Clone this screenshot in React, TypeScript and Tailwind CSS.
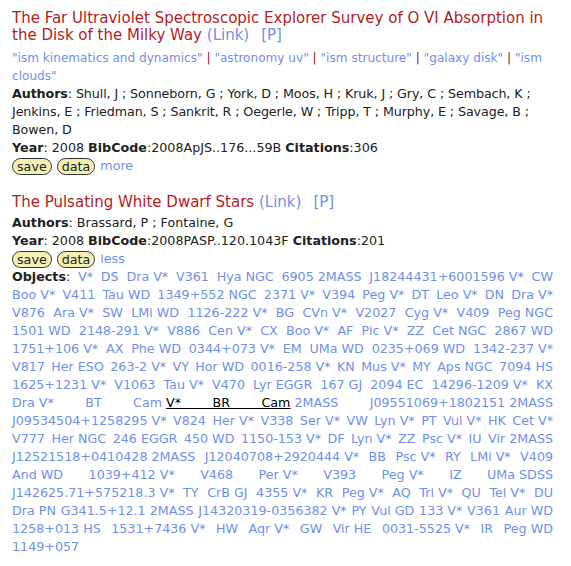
import React from 'react'

const objects = [
  'V* DS Dra', 'V* V361 Hya', 'NGC 6905', '2MASS J18244431+6001596', 'V* CW Boo', 'V* V411 Tau', 'WD 1349+552',
  'NGC 2371', 'V* V394 Peg', 'V* DT Leo', 'V* DN Dra', 'V* V876 Ara', 'V* SW LMi', 'WD 1126-222', 'V* BG CVn',
  'V* V2027 Cyg', 'V* V409 Peg', 'NGC 1501', 'WD 2148-291', 'V* V886 Cen', 'V* CX Boo', 'V* AF Pic', 'V* ZZ Cet',
  'NGC 2867', 'WD 1751+106', 'V* AX Phe', 'WD 0344+073', 'V* EM UMa', 'WD 0235+069', 'WD 1342-237', 'V* V817 Her',
  'ESO 263-2', 'V* VY Hor', 'WD 0016-258', 'V* KN Mus', 'V* MY Aps', 'NGC 7094', 'HS 1625+1231', 'V* V1063 Tau',
  'V* V470 Lyr', 'EGGR 167', 'GJ 2094', 'EC 14296-1209', 'V* KX Dra', 'V* BT Cam', 'V* BR Cam',
  '2MASS J09551069+1802151', '2MASS J09534504+1258295', 'V* V824 Her', 'V* V338 Ser', 'V* VW Lyn', 'V* PT Vul',
  'V* HK Cet', 'V* V777 Her', 'NGC 246', 'EGGR 450', 'WD 1150-153', 'V* DF Lyn', 'V* ZZ Psc', 'V* IU Vir',
  '2MASS J12521518+0410428', '2MASS J12040708+2920444', 'V* BB Psc', 'V* RY LMi', 'V* V409 And', 'WD 1039+412',
  'V* V468 Per', 'V* V393 Peg', 'V* IZ UMa', 'SDSS J142625.71+575218.3', 'V* TY CrB', 'GJ 4355', 'V* KR Peg',
  'V* AQ Tri', 'V* QU Tel', 'V* DU Dra', 'PN G341.5+12.1', '2MASS J14320319-0356382', 'V* PY Vul', 'GD 133',
  'V* V361 Aur', 'WD 1258+013', 'HS 1531+7436', 'V* HW Aqr', 'V* GW Vir', 'HE 0031-5525', 'V* IR Peg', 'WD 1149+057',
]

const keywords = ['ism kinematics and dynamics', 'astronomy uv', 'ism structure', 'galaxy disk', 'ism clouds']

const Pill = ({ label }: { label: string }) => (
  <span className="inline-block rounded-full border border-[#333] bg-[#f6efb4] px-[4px] leading-[15px] text-[#222]">
    {label}
  </span>
)

const Title = ({ text }: { text: string }) => (
  <div className="text-[15px] leading-[17px] text-[#b21d1d]">
    {text} <a className="text-[#6f90e8]">(Link)</a>
    <span className="ml-3 text-[#6f90e8]">[P]</span>
  </div>
)

export default function App() {
  return (
    <div className="w-[571px] min-h-[566px] bg-white pl-[12px] pr-[18px] pt-[10px] text-[12.7px] leading-[18px] text-[#222]" style={{ fontFamily: '"DejaVu Sans", Verdana, sans-serif' }}>
      <div>
        <Title text="The Far Ultraviolet Spectroscopic Explorer Survey of O VI Absorption in the Disk of the Milky Way" />
        <div className="mt-[5px] text-[12.1px] text-[#6f90e8]">
          {keywords.map((k, i) => (
            <span key={k}>
              {i > 0 && <span className="text-[#8a2020]"> | </span>}
              <a>"{k}"</a>
            </span>
          ))}
        </div>
        <div className="tracking-[-0.1px]">
          <b>Authors</b>: Shull, J ; Sonneborn, G ; York, D ; Moos, H ; Kruk, J ; Gry, C ; Sembach, K ; Jenkins, E ; Friedman, S ; Sankrit, R ; Oegerle, W ; Tripp, T ; Murphy, E ; Savage, B ; Bowen, D
        </div>
        <div>
          <b>Year</b>: 2008 <b>BibCode</b>:2008ApJS..176...59B <b>Citations</b>:306
        </div>
        <div className="flex items-center gap-[5px]">
          <Pill label="save" />
          <Pill label="data" />
          <a className="text-[#6f90e8]">more</a>
        </div>
      </div>

      <div className="mt-[19px]">
        <Title text="The Pulsating White Dwarf Stars" />
        <div className="mt-[3px]">
          <b>Authors</b>: Brassard, P ; Fontaine, G
        </div>
        <div>
          <b>Year</b>: 2008 <b>BibCode</b>:2008PASP..120.1043F <b>Citations</b>:201
        </div>
        <div className="flex items-center gap-[5px]">
          <Pill label="save" />
          <Pill label="data" />
          <a className="text-[#6f90e8]">less</a>
        </div>
        <div className="text-justify">
          <b>Objects</b>:{' '}
          {objects.map((o) => (
            <a key={o} className={o === 'V* BR Cam' ? 'mr-[4px] text-black underline' : 'mr-[4px] text-[#6f90e8]'}>{o}</a>
          ))}
        </div>
      </div>
    </div>
  )
}
